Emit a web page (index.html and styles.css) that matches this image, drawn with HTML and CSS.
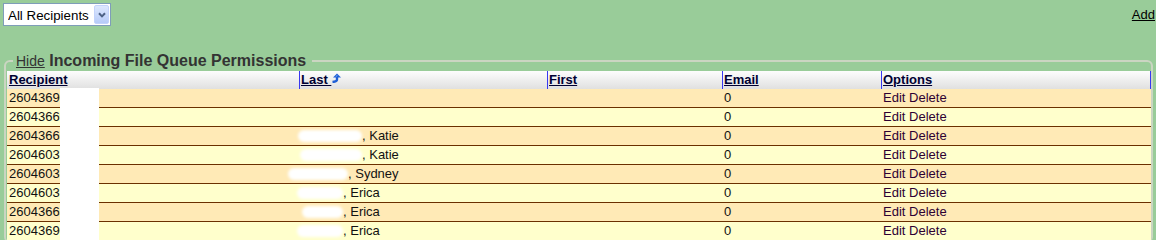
FILE: index.html
```html
<!DOCTYPE html>
<html>
<head>
    <meta charset="UTF-8">
    <title>Incoming File Queue Permissions</title>
    <link rel="stylesheet" href="styles.css">
</head>
<body>
    <div class="toolbar">
        <div class="picker">
            <select class="picker-select">
                <option>All Recipients</option>
            </select>
            <span class="picker-btn">
                <svg width="8" height="6" viewBox="0 0 8 6"><path d="M1 1.2 L4 4.4 L7 1.2" fill="none" stroke="#4d6185" stroke-width="2"/></svg>
            </span>
        </div>
        <a href="#" class="add-link">Add</a>
    </div>

    <fieldset class="queue">
        <legend class="queue-title"><a href="#" class="hide-link">Hide</a> Incoming File Queue Permissions</legend>
        <div class="grid-wrap">
            <table class="grid">
                <thead>
                    <tr>
                        <th class="c-rec"><a href="#">Recipient</a></th>
                        <th class="c-last"><a href="#">Last <svg class="sort" width="10" height="10" viewBox="0 0 10 10"><path d="M2 4.6 L6 0.6 L10 4.6 Z" fill="#1f5fd6"/><path d="M6 4 L6 6.5 Q6 8.6 1.5 9" fill="none" stroke="#1f5fd6" stroke-width="2.4"/><path d="M5.2 3.6 L6 2.4" stroke="#9cc4ff" stroke-width="1"/></svg></a></th>
                        <th class="c-first"><a href="#">First</a></th>
                        <th class="c-email"><a href="#">Email</a></th>
                        <th class="c-opt"><a href="#">Options</a></th>
                    </tr>
                </thead>
                <tbody>
                    <tr>
                        <td>260436901</td>
                        <td></td>
                        <td></td>
                        <td>0</td>
                        <td><a href="#" class="act">Edit</a> <a href="#" class="act">Delete</a></td>
                    </tr>
                    <tr>
                        <td>260436692</td>
                        <td></td>
                        <td></td>
                        <td>0</td>
                        <td><a href="#" class="act">Edit</a> <a href="#" class="act">Delete</a></td>
                    </tr>
                    <tr>
                        <td>260436653</td>
                        <td><span class="redact" style="margin-left:-3px;width:64px"></span>, Katie</td>
                        <td></td>
                        <td>0</td>
                        <td><a href="#" class="act">Edit</a> <a href="#" class="act">Delete</a></td>
                    </tr>
                    <tr>
                        <td>260460317</td>
                        <td><span class="redact" style="margin-left:-1px;width:62px"></span>, Katie</td>
                        <td></td>
                        <td>0</td>
                        <td><a href="#" class="act">Edit</a> <a href="#" class="act">Delete</a></td>
                    </tr>
                    <tr>
                        <td>260460318</td>
                        <td><span class="redact" style="margin-left:-13px;width:60px"></span>, Sydney</td>
                        <td></td>
                        <td>0</td>
                        <td><a href="#" class="act">Edit</a> <a href="#" class="act">Delete</a></td>
                    </tr>
                    <tr>
                        <td>260460319</td>
                        <td><span class="redact" style="margin-left:-4px;width:46px"></span>, Erica</td>
                        <td></td>
                        <td>0</td>
                        <td><a href="#" class="act">Edit</a> <a href="#" class="act">Delete</a></td>
                    </tr>
                    <tr>
                        <td>260436654</td>
                        <td><span class="redact" style="margin-left:1px;width:41px"></span>, Erica</td>
                        <td></td>
                        <td>0</td>
                        <td><a href="#" class="act">Edit</a> <a href="#" class="act">Delete</a></td>
                    </tr>
                    <tr>
                        <td>260436902</td>
                        <td><span class="redact" style="margin-left:-4px;width:46px"></span>, Erica</td>
                        <td></td>
                        <td>0</td>
                        <td><a href="#" class="act">Edit</a> <a href="#" class="act">Delete</a></td>
                    </tr>
                </tbody>
            </table>
            <div class="mask"></div>
        </div>
    </fieldset>
</body>
</html>
```

FILE: styles.css
```css
html, body {
    margin: 0;
    overflow: hidden;
}
body {
    background-color: #99CC99;
    font-family: "Liberation Sans", Arial, sans-serif;
    font-size: 13px;
    color: #000000;
}

/* top bar */
.toolbar {
    display: flex;
    justify-content: space-between;
    align-items: center;
    padding: 3px 1px 0 3px;
}
.picker {
    display: flex;
    align-items: center;
    width: 108px;
    height: 23px;
    box-sizing: border-box;
    border: 1px solid #7F9DB9;
    background-color: #FFFFFF;
}
.picker-select {
    -webkit-appearance: none;
    appearance: none;
    flex: 1;
    min-width: 0;
    margin: 0;
    padding: 1px 0 0 4px;
    border: 0;
    outline: none;
    background: transparent;
    color: #000000;
    font-family: "Liberation Sans", Arial, sans-serif;
    font-size: 13.33px;
}
.picker-btn {
    display: flex;
    align-items: center;
    justify-content: center;
    width: 15px;
    height: 19px;
    box-sizing: border-box;
    margin-right: 1px;
    border: 1px solid #C3D3FB;
    border-radius: 2px;
    background: linear-gradient(#DDE8FE, #B7CBF8);
}
.add-link {
    color: #000000;
}

/* queue box */
.queue {
    margin: 26px 3px 0 4px;
    padding: 0 0 0 1px;
    border: 2px solid #CBD5C2;
    border-radius: 6px;
    min-width: 0;
}
.queue-title {
    margin-left: 6px;
    padding: 0 6px 0 3px;
    color: #333333;
    font-size: 16px;
    font-weight: bold;
}
.hide-link {
    color: #333333;
    font-size: 14px;
    font-weight: normal;
}

.grid-wrap {
    position: relative;
    margin-top: 1px;
}
.grid {
    width: 1144px;
    table-layout: fixed;
    border-collapse: separate;
    border-spacing: 0;
}
.grid th {
    box-sizing: border-box;
    height: 18px;
    padding: 0 0 0 1px;
    border-left: 1px solid #3838F0;
    background: linear-gradient(#FDFDFD, #E0E0E0);
    line-height: 18px;
    text-align: left;
    white-space: nowrap;
}
.grid th a {
    color: #000033;
}
.grid th.c-rec {
    width: 292px;
    padding-left: 2px;
    border-left: 0;
}
.grid th.c-last { width: 248px; }
.grid th.c-first { width: 175px; }
.grid th.c-email { width: 159px; }
.grid th.c-opt {
    width: 270px;
    border-right: 1px solid #3838F0;
}
.sort {
    vertical-align: 1px;
}
.grid td {
    height: 18px;
    padding: 0 2px;
    border-bottom: 1px solid #6B3000;
    line-height: 18px;
    white-space: nowrap;
    color: #111111;
}
.grid tbody tr:nth-child(odd) td {
    background-color: #FFEAB6;
}
.grid tbody tr:nth-child(even) td {
    background-color: #FFFFCC;
}
.act {
    color: #2E0033;
    text-decoration: none;
}
.redact {
    display: inline-block;
    height: 12px;
    vertical-align: -2px;
    border-radius: 6px;
    background-color: #FFFFFF;
    filter: blur(1.5px);
}
.mask {
    position: absolute;
    left: 53px;
    top: 17px;
    bottom: 0;
    width: 39px;
    background-color: #FFFFFF;
}
```
